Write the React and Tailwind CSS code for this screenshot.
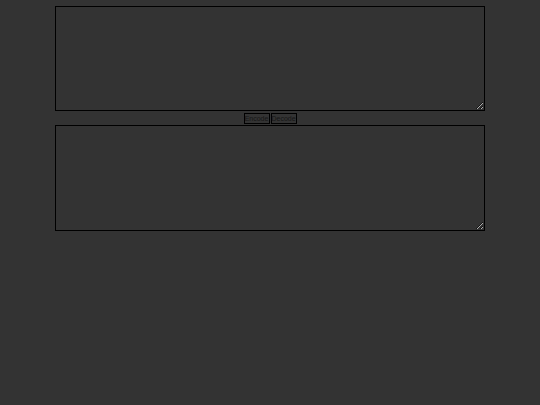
import React from 'react';

const App = () => {
  return (
    <div className="min-h-screen w-full bg-[#333333] pt-[6px]" style={{ fontFamily: '"Liberation Sans", Arial, sans-serif' }}>
      <div className="mx-auto flex w-[430px] flex-col items-center">
        <textarea className="block h-[105px] w-[430px] resize-y border border-black bg-[#333333] text-[#222]" />
        <div className="mt-[2px] mb-[1px] flex items-center">
          <button className="flex h-[11px] w-[26px] items-center justify-center border border-black bg-[#333333] p-0 text-[7px] leading-none text-[#151515]">Encode</button>
          <button className="ml-px flex h-[11px] w-[26px] items-center justify-center border border-black bg-[#333333] p-0 text-[7px] leading-none text-[#151515]">Decode</button>
        </div>
        <textarea className="block h-[106px] w-[430px] resize-y border border-black bg-[#333333] text-[#222]" />
      </div>
    </div>
  );
};

export default App;
